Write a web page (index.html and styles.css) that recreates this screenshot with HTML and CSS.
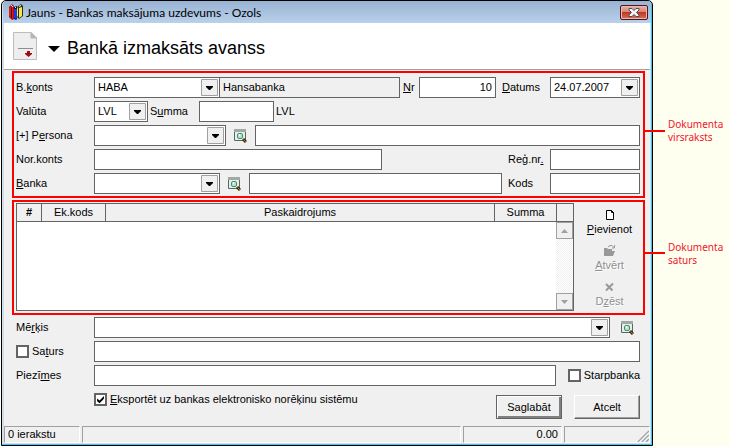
FILE: index.html
```html
<!DOCTYPE html>
<html lang="lv">
<head>
<meta charset="utf-8">
<title>Jauns - Bankas maksājuma uzdevums - Ozols</title>
<link rel="stylesheet" href="styles.css">
</head>
<body>
<svg class="symbols" aria-hidden="true">
  <symbol id="lookup" viewBox="0 0 13 14">
    <path fill="#fff" d="M0 0h12v12H0z"/>
    <path fill="none" stroke="#5a6666" d="M.5.5h11v11H.5z"/>
    <path fill="#a0a8a8" d="M0 0h12v3H0z"/>
    <path fill="#e4eeea" d="M1 3h10v8H1z"/>
    <rect x="3.500" y="4.500" width="5" height="5" rx="1.500" fill="#b5e8c8" stroke="#4a8a6b"/>
    <path fill="#fff" d="M5 5h1v2H5z"/>
    <path stroke="#3a2b0a" stroke-width="3" d="M9 10l3 3"/>
    <path stroke="#a8861c" d="M9.500 10.500l2.500 2.500"/>
  </symbol>
</svg>
<div class="page">
  <div class="window">
    <header class="titlebar">
      <svg class="books" viewBox="0 0 14 16" aria-hidden="true">
        <path fill="#a01018" d="M0 3l3-3 2 2v13l-2 1-3-3z"/>
        <path fill="#e01822" d="M0 4l2-1v10l-2-1zM3 3h1v12l-1-1z"/>
        <path fill="#f0e0e0" d="M2 1h1v1H2zM3 2h1v1H3z"/>
        <path fill="#400408" d="M2 4h1v10H2z"/>
        <path fill="#0c0c50" d="M5 3l3-1v13l-1 1-2-1z"/>
        <path fill="#2038e8" d="M5 5h3v9l-1 1-2-1z"/>
        <path fill="#e8e8f8" d="M6 3h1v1H6z"/>
        <path fill="#302c08" d="M8 3l4-3 2 2v10l-4 3-2-2z"/>
        <path fill="#f4e848" d="M8 4l1-1v9l-1 1zM10 4l3-1v9l-3 2z"/>
        <path fill="#fff" d="M10 2l2-1v1l-2 1z"/>
      </svg>
      <span class="caption">Jauns - Bankas maksājuma uzdevums - Ozols</span>
      <button class="close" type="button" aria-label="Aizvērt">
        <svg viewBox="0 0 12 9" aria-hidden="true">
          <path d="M1 .5h3l2 2 2-2h3v1.500L8.500 4.500 11 7v1.500H8l-2-2-2 2H1V7l2.500-2.500L1 2z" fill="#f4f4f4" stroke="#4a4a60"/>
        </svg>
      </button>
    </header>
    <div class="heading">
      <svg class="doc" viewBox="0 0 24 28" aria-hidden="true">
        <path d="M.5.5H18l5.500 5.500v21.500H.5z" fill="#eee" stroke="#bdbdbd"/>
        <path d="M18 .5V6h5.500z" fill="#b5b5b5" stroke="#b5b5b5"/>
        <path d="M5 16.500h15" stroke="#8e8e8e"/>
        <path d="M14 19h3v2h2v1l-3.500 3L12 22v-1h2z" fill="#a00c10"/>
      </svg>
      <svg class="caret" viewBox="0 0 12 6" aria-hidden="true"><path d="M0 0h12L6 6z"/></svg>
      <h1>Bankā izmaksāts avanss</h1>
    </div>
    <form class="form">
      <section class="marked fields">
        <div class="row">
          <label class="name" for="konts">B.<u>k</u>onts</label>
          <select class="combo account" id="konts"><option>HABA</option></select>
          <input class="joined grow" aria-label="Konta nosaukums" value="Hansabanka" readonly>
          <label class="nr" for="nr"><u>N</u>r</label>
          <input class="number" id="nr" value="10">
          <label class="datums" for="datums"><u>D</u>atums</label>
          <select class="combo short" id="datums"><option>24.07.2007</option></select>
        </div>
        <div class="row">
          <label class="name" for="valuta">Valūta</label>
          <select class="combo currency" id="valuta"><option>LVL</option></select>
          <label class="sum-label" for="summa">S<u>u</u>mma</label>
          <input class="sum" id="summa">
          <span class="unit">LVL</span>
        </div>
        <div class="row">
          <label class="name" for="persona">[+] P<u>e</u>rsona</label>
          <select class="combo person" id="persona"><option></option></select>
          <button class="lookup" type="button" aria-label="Meklēt personu"><svg><use href="#lookup"/></svg></button>
          <input class="grow" aria-label="Personas nosaukums">
        </div>
        <div class="row">
          <label class="name" for="norkonts">Nor.konts</label>
          <input class="settle" id="norkonts">
          <label class="side" for="regnr">Reģ.nr<u>.</u></label>
          <input class="short" id="regnr">
        </div>
        <div class="row">
          <label class="name" for="banka"><u>B</u>anka</label>
          <select class="combo account" id="banka"><option></option></select>
          <button class="lookup" type="button" aria-label="Meklēt banku"><svg><use href="#lookup"/></svg></button>
          <input class="grow" aria-label="Bankas nosaukums">
          <label class="side after" for="kods">Kods</label>
          <input class="short" id="kods">
        </div>
      </section>

      <section class="marked content">
        <div class="sheet">
          <table>
            <thead>
              <tr><th class="c-num">#</th><th class="c-code">Ek.kods</th><th>Paskaidrojums</th><th class="c-sum">Summa</th><td class="c-bar"></td></tr>
            </thead>
          </table>
          <div class="scroll">
            <button type="button" aria-label="Uz augšu"><svg viewBox="0 0 7 4"><path d="M0 4h7L3.500 0z"/></svg></button>
            <button type="button" aria-label="Uz leju"><svg viewBox="0 0 7 4"><path d="M0 0h7L3.500 4z"/></svg></button>
          </div>
        </div>
        <div class="tools">
          <button type="button">
            <svg viewBox="0 0 13 11"><path d="M3.500 1.500h5l2 2v7h-7z" fill="#fff" stroke="#000"/><path d="M8.500 1.500v2h2" fill="none" stroke="#000"/></svg>
            <span><u>P</u>ievienot</span>
          </button>
          <button type="button" disabled>
            <svg viewBox="0 0 13 11"><path d="M1 3h3l1 1h4v2h3l-2 5H1z" fill="#999"/><path d="M5 2l2-1.500h2l2 2M11.500 0v3H9" fill="none" stroke="#999"/></svg>
            <span><u>A</u>tvērt</span>
          </button>
          <button type="button" disabled>
            <svg viewBox="0 0 13 11"><path d="M3 3l6.500 6.500M10 2.500L3 9.500" fill="none" stroke="#999" stroke-width="2"/></svg>
            <span>D<u>z</u>ēst</span>
          </button>
        </div>
      </section>

      <section class="fields extra">
        <div class="row">
          <label class="name" for="merkis">Mē<u>r</u>ķis</label>
          <select class="combo grow" id="merkis"><option></option></select>
          <button class="lookup end" type="button" aria-label="Meklēt mērķi"><svg><use href="#lookup"/></svg></button>
        </div>
        <div class="row">
          <label class="name check"><input type="checkbox"><span>Sa<u>t</u>urs</span></label>
          <input class="grow" aria-label="Saturs">
        </div>
        <div class="row">
          <label class="name" for="piezimes">Piezī<u>m</u>es</label>
          <input class="grow" id="piezimes">
          <label class="check inter"><input type="checkbox"><span>Starpbanka</span></label>
        </div>
        <div class="finish">
          <label class="check"><input type="checkbox" checked><span><u>E</u>ksportēt uz bankas elektronisko norēķinu sistēmu</span></label>
          <div class="actions">
            <button class="push default" type="submit">Sa<u>g</u>labāt</button>
            <button class="push" type="button">Atcelt</button>
          </div>
        </div>
      </section>
    </form>
    <footer class="status">
      <span class="count">0 ierakstu</span>
      <span class="message"></span>
      <span class="total">0.00</span>
      <span class="last"><svg viewBox="0 0 12 12" aria-hidden="true"><path d="M1 12L12 1M5 12l7-7M9 12l3-3" stroke="#a0a0a0" stroke-width="1.500"/><path d="M2.500 12L12 2.500M6.500 12L12 6.500" stroke="#fff"/></svg></span>
    </footer>
  </div>
  <aside class="notes">
    <p>Dokumenta virsraksts</p>
    <p>Dokumenta saturs</p>
  </aside>
</div>
</body>
</html>
```
FILE: styles.css
```css
* { box-sizing: border-box; }

body {
  margin: 0;
  background: #ffffef;
  color: #000;
  font: 11px/13px "Liberation Sans", Arial, sans-serif;
}

input, select, button { font: inherit; color: inherit; margin: 0; }
button { padding: 0; border: 0; background: none; }
svg { display: block; }
.symbols { position: absolute; width: 0; height: 0; }

.page { display: flex; min-height: 100vh; }

/* Window frame */
.window {
  flex: 1;
  min-width: 0;
  display: flex;
  flex-direction: column;
  margin-left: 1px;
  padding: 0 2px 2px;
  border: 1px solid #000;
  border-radius: 5px 5px 0 0;
  background: #cfdff0;
  box-shadow: inset -1px -1px 0 #3cc8ea;
}

.titlebar {
  display: flex;
  align-items: center;
  height: 22px;
  margin: 0 -1px;
  padding: 0 3px 0 6px;
  border-radius: 4px 4px 0 0;
  background: linear-gradient(#98b2d2, #b9d1ea);
}
.books { width: 14px; height: 16px; }
.caption {
  flex: 1;
  margin-left: 3px;
  padding-top: 2px;
  font: 12px/20px Lato, "Open Sans", sans-serif;
}
.close {
  display: grid;
  place-items: center;
  width: 28px;
  height: 15px;
  border: 1px solid #4a1420;
  border-radius: 2px;
  background: linear-gradient(#eab0a4, #d98070 48%, #bd3a22 50%, #d4705c);
  box-shadow: inset 0 0 0 1px #f0b8ac;
}
.close svg { width: 12px; height: 9px; }

.heading {
  display: flex;
  align-items: center;
  height: 47px;
  padding-left: 9px;
  border-bottom: 1px solid #a0a0a0;
  background: #fff;
}
.doc { width: 24px; height: 28px; }
.caret { width: 12px; height: 6px; margin: 6px 7px 0 11px; }
h1 { margin: 0; padding-top: 4px; font-size: 18px; line-height: 22px; font-weight: 400; }

/* Form */
.form { flex: 1; padding: 1px 5px 0 8px; background: #f0f0f0; }
.marked { position: relative; border: 2px solid #f00; }
.marked::after {
  content: "";
  position: absolute;
  left: 100%;
  top: 57px;
  width: 22px;
  height: 2px;
  background: #f00;
}
.content::after { top: 50px; }

.fields { display: flex; flex-direction: column; gap: 3px; padding: 4px 3px 2px 2px; }
.row { display: flex; align-items: center; height: 21px; }
.row label { flex: none; white-space: nowrap; }
.name { width: 78px; }
.grow { flex: 1; }

.row > input, .combo {
  min-width: 0;
  height: 21px;
  padding: 0 3px 1px;
  border: 1px solid #646464;
  border-radius: 0;
  background-color: #fff;
}
.combo {
  appearance: none;
  padding-right: 20px;
  background-image: url("data:image/svg+xml,%3Csvg xmlns='http://www.w3.org/2000/svg' width='17' height='17'%3E%3Cpath d='M.5.5h16v16H.5z' fill='%23f0f0f0' stroke='%23a0a0a0'/%3E%3Cpath d='M5 7h7v1l-3 3H8L5 8z'/%3E%3C/svg%3E");
  background-repeat: no-repeat;
  background-position: right 1px center;
}
.account { width: 126px; }
.currency { width: 54px; }
.person { width: 132px; }
.short { width: 90px; }
.row > .joined { margin-left: -1px; background-color: #f0f0f0; }
.nr { width: 19px; padding-left: 3px; }
.number { width: 77px; text-align: right; }
.datums { width: 54px; padding-left: 6px; }
.sum-label { width: 51px; padding-left: 2px; }
.sum { width: 75px; }
.unit { margin-left: 2px; }
.settle { width: 288px; }
.side { width: 42px; margin-left: auto; }
.side.after { margin-left: 6px; }
.lookup { flex: none; margin: 0 8px; }
.lookup svg { width: 13px; height: 14px; }
.lookup.end { margin: 0 6px 0 11px; }

/* Document lines */
.content { display: flex; margin-top: 2px; padding: 1px 0 2px 2px; }
.sheet {
  flex: 1;
  display: flex;
  flex-direction: column;
  min-height: 108px;
  border: 1px solid #646464;
  background: #fff;
}
table { width: 100%; border-collapse: separate; border-spacing: 0; table-layout: fixed; background: #f0f0f0; }
th, td { height: 18px; padding: 0; border-bottom: 1px solid #646464; font-weight: 400; }
th + th, th + td { border-left: 1px solid #646464; }
.c-num { width: 24px; font-weight: 700; }
.c-code { width: 64px; }
.c-sum { width: 62px; }
.c-bar { width: 17px; }
.scroll {
  flex: 1;
  align-self: flex-end;
  display: flex;
  flex-direction: column;
  justify-content: space-between;
  width: 17px;
  background: repeating-conic-gradient(#fff 0 25%, #f0f0f0 0 50%) 0 0 / 2px 2px;
}
.scroll button {
  display: grid;
  place-items: center;
  height: 17px;
  border: 1px solid #a0a0a0;
  background: #f0f0f0;
}
.scroll svg { width: 7px; height: 4px; fill: #a0a0a0; }

.tools { display: flex; flex-direction: column; width: 69px; padding: 6px 0 0 2px; gap: 9px; }
.tools button { display: flex; flex-direction: column; align-items: center; gap: 3px; }
.tools svg { width: 13px; height: 11px; }
.tools button:disabled { color: #909090; text-shadow: 1px 1px 0 #fff; }

/* Lower fields */
.extra { padding: 2px 5px 0 4px; }
.check { display: flex; align-items: center; gap: 3px; }
.check input {
  appearance: none;
  display: grid;
  width: 13px;
  height: 13px;
  border: 2px solid #646464;
  background: #fff;
}
.check input:checked::before {
  content: "";
  background: #000;
  clip-path: polygon(12% 40%, 40% 62%, 88% 12%, 88% 42%, 40% 92%, 12% 70%);
}
.inter { margin-left: 12px; }
.finish { display: flex; align-items: flex-start; justify-content: space-between; padding: 4px 0 0 78px; }
.actions { display: flex; gap: 12px; padding-top: 2px; }
.push {
  width: 66px;
  height: 24px;
  border: 1px solid;
  border-color: #fff #646464 #646464 #fff;
  background: #f0f0f0;
  box-shadow: inset -1px -1px 0 #a0a0a0;
}
.push.default {
  border-color: #646464;
  box-shadow: inset 1px 1px 0 #fff, inset -2px -2px 0 #808080;
}

/* Status bar */
.status { display: flex; gap: 2px; height: 17px; background: #f0f0f0; }
.status span {
  border: 1px solid;
  border-color: #a0a0a0 #fff #fff #a0a0a0;
  padding: 1px 3px 0;
}
.count { width: 76px; }
.message { flex: 1; }
.total { width: 99px; text-align: right; }
.status .last { display: flex; justify-content: flex-end; align-items: flex-end; width: 86px; padding: 0; }
.last svg { width: 12px; height: 12px; }

/* Captions beside the window */
.notes {
  width: 77px;
  padding: 118px 4px 0 15px;
  color: #f0142d;
  font: 10px/13px "Noto Sans", "Open Sans", sans-serif;
}
.notes p { margin: 0 0 97px; }
```
